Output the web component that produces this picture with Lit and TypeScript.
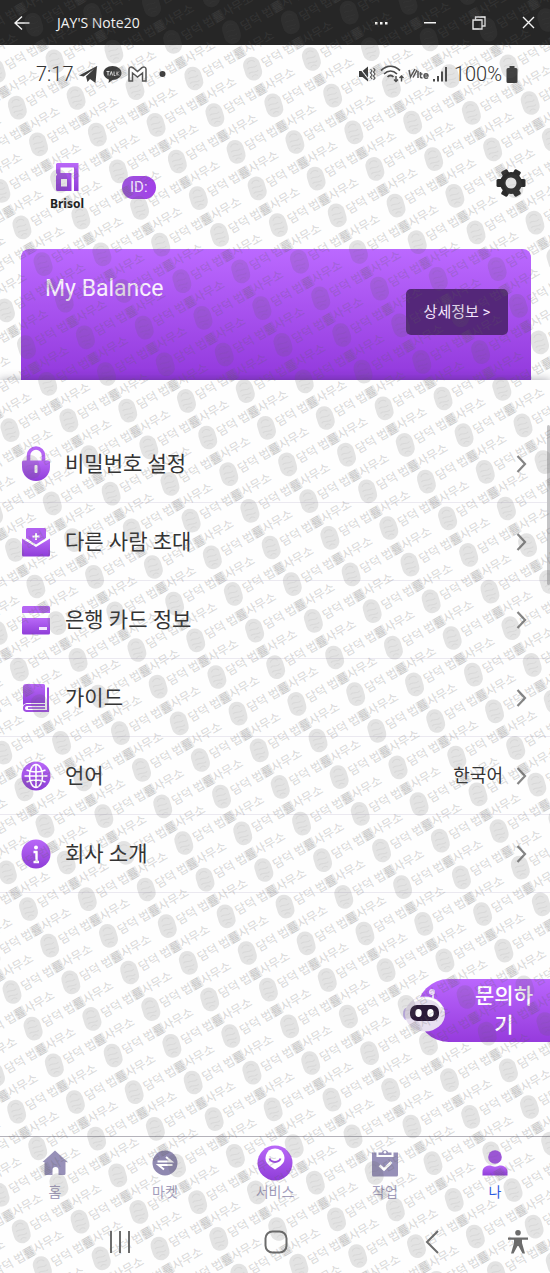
import { LitElement, html, css, svg } from "lit";
import { customElement, state } from "lit/decorators.js";

const iconGradient = svg`
  <linearGradient id="violet" x1="0" y1="0" x2="0" y2="1">
    <stop offset="0" stop-color="#b968f8"></stop>
    <stop offset="1" stop-color="#8f3dd8"></stop>
  </linearGradient>`;

const menuIcons = {
  lock: html`<svg class="glyph" viewBox="0 0 30 36" width="30" height="36" aria-hidden="true">
    <defs>${iconGradient}</defs>
    <path d="M7.500 17V9.500a7.500 7.500 0 0 1 15 0V17" fill="none" stroke="#b565f4" stroke-width="3.600"></path>
    <path d="M2.500 14.500h25a1.500 1.500 0 0 1 1.500 1.500v5a14 14 0 0 1-28 0v-5a1.500 1.500 0 0 1 1.500-1.500z" fill="url(#violet)"></path>
    <rect x="13.500" y="19" width="3" height="8" rx="1" fill="#fff"></rect>
  </svg>`,
  invite: html`<svg class="glyph" viewBox="0 0 30 30" width="30" height="30" aria-hidden="true">
    <defs>${iconGradient}</defs>
    <path d="M6.500 1h17a1.500 1.500 0 0 1 1.500 1.500v8.500L15 17.500 5 11V2.500A1.500 1.500 0 0 1 6.500 1z" fill="#b061f0"></path>
    <path d="M15 6v7M11.500 9.500h7" stroke="#fff" stroke-width="1.800"></path>
    <path d="M1 11.500l14 8.500 14-8.500V28a1.500 1.500 0 0 1-1.500 1.500h-25A1.500 1.500 0 0 1 1 28z" fill="url(#violet)"></path>
  </svg>`,
  card: html`<svg class="glyph" viewBox="0 0 30 30" width="30" height="30" aria-hidden="true">
    <defs>${iconGradient}</defs>
    <path d="M2.500 1h25A1.500 1.500 0 0 1 29 2.500V8H1V2.500A1.500 1.500 0 0 1 2.500 1z" fill="#b565f4"></path>
    <path d="M1 13h28v15a1.500 1.500 0 0 1-1.500 1.500h-25A1.500 1.500 0 0 1 1 28z" fill="url(#violet)"></path>
    <rect x="18" y="22" width="8" height="3" fill="#f3e5ff"></rect>
  </svg>`,
  book: html`<svg class="glyph" viewBox="0 0 30 30" width="30" height="30" aria-hidden="true">
    <defs>${iconGradient}</defs>
    <path d="M5 1h17.500A1.500 1.500 0 0 1 24 2.500V20H7c-2 0-3 .5-5 2V4a3 3 0 0 1 3-3z" fill="url(#violet)"></path>
    <path d="M27 4.500V28H5.500a3 3 0 0 1-2.500-3.200 3 3 0 0 1 3-2.800H24" fill="none" stroke="#a14fe4" stroke-width="2"></path>
    <path d="M7 25h17" stroke="#8f3dd8" stroke-width="1.500"></path>
  </svg>`,
  globe: html`<svg class="glyph" viewBox="0 0 30 30" width="30" height="30" aria-hidden="true">
    <defs>${iconGradient}</defs>
    <circle cx="15" cy="15" r="14.500" fill="url(#violet)"></circle>
    <g fill="none" stroke="#fff" stroke-width="1.600">
      <ellipse cx="15" cy="15" rx="6.500" ry="11.500"></ellipse>
      <path d="M15 3.500v23M3.500 15h23M5.500 9c6 2.500 13 2.500 19 0M5.500 21c6-2.500 13-2.500 19 0"></path>
    </g>
  </svg>`,
  info: html`<svg class="glyph" viewBox="0 0 30 30" width="30" height="30" aria-hidden="true">
    <defs>${iconGradient}</defs>
    <circle cx="15" cy="15" r="14.500" fill="url(#violet)"></circle>
    <circle cx="15" cy="8.500" r="2" fill="#fff"></circle>
    <path d="M12.500 13h3v9.500M12.500 23h5.500" fill="none" stroke="#fff" stroke-width="2.400"></path>
  </svg>`,
};

const tabIcons = {
  home: html`<svg viewBox="0 0 28 28" width="28" height="28" aria-hidden="true">
    <path d="M14 1.500L26.500 13h-2v11.500a1.500 1.500 0 0 1-1.500 1.500h-5.500v-5a3 3 0 0 0-6 0v5H5a1.500 1.500 0 0 1-1.500-1.500V13h-2z" fill="#9790b8"></path>
  </svg>`,
  market: html`<svg viewBox="0 0 28 28" width="28" height="28" aria-hidden="true">
    <circle cx="14" cy="14" r="12.500" fill="#8f88b0"></circle>
    <path d="M6.500 12.500h14L15 8M21.500 16h-14L13 20.500" fill="none" stroke="#fff" stroke-width="2"></path>
  </svg>`,
  service: html`<svg viewBox="0 0 36 36" width="36" height="36" aria-hidden="true">
    <defs>${iconGradient}</defs>
    <circle cx="18" cy="18" r="17.500" fill="url(#violet)"></circle>
    <path d="M18 3.500a9.500 9.500 0 0 1 5.500 17.200L18 24.500l-5.500-3.800A9.500 9.500 0 0 1 18 3.500z" fill="#fff"></path>
    <path d="M12.500 13.500c1.500 4.500 9.500 4.500 11 0" fill="none" stroke="#a24fe6" stroke-width="2"></path>
  </svg>`,
  task: html`<svg viewBox="0 0 28 28" width="28" height="28" aria-hidden="true">
    <path d="M1 3.500h4.500V8h17V3.500H27V26a1.500 1.500 0 0 1-1.500 1.500h-23A1.500 1.500 0 0 1 1 26z" fill="#9790b8"></path>
    <path d="M7.500 6V3.500h3.200a3.500 3.500 0 0 1 6.600 0h3.200V6z" fill="#9790b8"></path>
    <circle cx="14" cy="3.300" r="1.300" fill="#fff"></circle>
    <path d="M8.500 16.500l4.500 4 7.500-7.500" fill="none" stroke="#fff" stroke-width="2.600"></path>
  </svg>`,
  me: html`<svg viewBox="0 0 28 28" width="28" height="28" aria-hidden="true">
    <defs>${iconGradient}</defs>
    <circle cx="14" cy="8" r="6.800" fill="#a855ec"></circle>
    <path d="M1.500 26.500V23c0-5 4-6.500 8-6.500 2.500 1.500 6.500 1.500 9 0 4 0 8 1.500 8 6.500v3.500z" fill="url(#violet)"></path>
  </svg>`,
};

interface MenuItem {
  icon: keyof typeof menuIcons;
  label: string;
  value?: string;
}

interface Tab {
  icon: keyof typeof tabIcons;
  label: string;
}

const MENU: MenuItem[] = [
  { icon: "lock", label: "비밀번호 설정" },
  { icon: "invite", label: "다른 사람 초대" },
  { icon: "card", label: "은행 카드 정보" },
  { icon: "book", label: "가이드" },
  { icon: "globe", label: "언어", value: "한국어" },
  { icon: "info", label: "회사 소개" },
];

const TABS: Tab[] = [
  { icon: "home", label: "홈" },
  { icon: "market", label: "마켓" },
  { icon: "service", label: "서비스" },
  { icon: "task", label: "작업" },
  { icon: "me", label: "나" },
];

/** Repeating seal and office name, laid out on a slanted lattice over the page. */
@customElement("office-watermark")
export class OfficeWatermark extends LitElement {
  static styles = css`
    :host {
      display: block;
      overflow: hidden;
      pointer-events: none;
    }
    .sheet {
      display: block;
      width: 100%;
      height: 100%;
    }
    .name {
      font-family: "Noto Sans CJK KR", sans-serif;
      font-size: 12px;
      font-weight: 500;
    }
  `;

  private marks() {
    const origin = { x: 17.3, y: 107.7 };
    const across = { x: 58.83, y: -9.75 };
    const down = { x: 21.15, y: 36.65 };
    const width = window.innerWidth;
    const height = window.innerHeight;
    const out = [];
    for (let n = -6; n < height / 30 + 8; n++) {
      for (let m = -30; m < width / 50 + 8; m++) {
        const x = origin.x + m * across.x + n * down.x;
        const y = origin.y + m * across.y + n * down.y;
        if (x < -100 || x > width + 20 || y < -20 || y > height + 60) continue;
        out.push(svg`<use href="#mark" x=${x.toFixed(1)} y=${y.toFixed(1)}></use>`);
      }
    }
    return out;
  }

  render() {
    return html`<svg class="sheet" aria-hidden="true">
      <defs>
        <g id="mark">
          <g transform="rotate(-17)">
            <rect x="-8.500" y="-12" width="17" height="24" rx="8.500" fill="#606060" fill-opacity="0.17"></rect>
            <path d="M-4 -6c2 -3 6 -3 8 0M-5 -1c3 -3 6 2 10 -1M-5 4c3 -3 7 2 10 -1M-3 8c2 -2 4 -2 6 0" fill="none" stroke="#606060" stroke-opacity="0.08"></path>
          </g>
          <g transform="translate(12 -1) rotate(-30)" fill="#606060" fill-opacity="0.22">
            <text class="name" x="0" y="0">담덕 법률사무소</text>
            <rect x="36" y="-10" width="11" height="11" fill-opacity="0.12"></rect>
          </g>
        </g>
      </defs>
      ${this.marks()}
    </svg>`;
  }
}

@customElement("app-root")
export class AppRoot extends LitElement {
  @state() private active = 4;

  static styles = css`
    :host {
      display: block;
      font-family: Roboto, "Noto Sans CJK KR", sans-serif;
      color: #333;
    }
    * {
      box-sizing: border-box;
    }
    button {
      border: 0;
      padding: 0;
      background: none;
      font: inherit;
      color: inherit;
      cursor: pointer;
    }
    svg {
      display: block;
      flex: none;
    }
    .page {
      position: relative;
      display: flex;
      flex-direction: column;
      min-height: 100vh;
      background: #fefefe;
    }
    .watermark {
      position: absolute;
      inset: 0;
      z-index: 2;
    }

    .titlebar {
      display: flex;
      align-items: center;
      height: 45px;
      background: #262626;
      color: #f4f4f4;
    }
    .titlebar button {
      display: grid;
      place-items: center;
      width: 44px;
      height: 40px;
    }
    .title {
      flex: 1;
      margin: 0 0 0 13px;
      font: 500 14px/24px "Open Sans", sans-serif;
    }
    .window-actions {
      display: flex;
      gap: 5px;
    }

    .status {
      display: flex;
      align-items: center;
      justify-content: space-between;
      padding: 15px 32px 0 36px;
      font-size: 20px;
      font-weight: 300;
      line-height: 28px;
      color: #333;
    }
    .status-side {
      display: flex;
      align-items: center;
      gap: 6px;
    }
    .status-side.right {
      gap: 4px;
    }

    .profile {
      display: flex;
      align-items: center;
      padding: 74px 24px 37px 49px;
    }
    .brand {
      display: flex;
      flex-direction: column;
      align-items: center;
      gap: 4px;
      width: 36px;
      font: 700 12px/16px "Noto Sans", sans-serif;
      color: #1d1d1d;
    }
    .id {
      margin-left: 37px;
      padding: 0 8px;
      border-radius: 12px;
      background: linear-gradient(90deg, #9d55dc, #a23fe8);
      color: #f3e4ff;
      font-size: 15px;
      line-height: 23px;
    }
    .settings {
      margin: 0 0 8px auto;
    }

    .balance {
      display: flex;
      justify-content: space-between;
      align-items: flex-start;
      min-height: 131px;
      margin: 0 19px 0 21px;
      padding: 24px 23px 24px 24px;
      border-radius: 8px 8px 0 0;
      background: linear-gradient(#bb69ff, #9239dc);
      color: #f8effc;
    }
    .balance h1 {
      margin: 0;
      font-size: 23px;
      font-weight: 400;
      line-height: 32px;
    }
    .details {
      margin-top: 16px;
      width: 102px;
      height: 46px;
      border-radius: 5px;
      background: #542779;
      color: #f4e6ff;
      font-size: 15px;
      line-height: 24px;
    }
    .details:hover {
      background: #63308c;
    }

    .panel {
      flex: 1;
      display: flex;
      flex-direction: column;
      padding-top: 45px;
      background: #fefefe;
      box-shadow: 0 -1px 8px rgba(40, 40, 60, 0.35);
      position: relative;
    }
    .scroll-thumb {
      position: absolute;
      top: 45px;
      right: 0;
      width: 3px;
      height: 160px;
      border-radius: 2px;
      background: #c4c4c6;
    }
    .menu {
      margin: 0;
      padding: 0;
      list-style: none;
    }
    .menu li {
      border-bottom: 1px solid #ebe9f0;
    }
    .row {
      display: flex;
      align-items: center;
      width: 100%;
      height: 77px;
      padding: 0 23px 0 21px;
      text-align: left;
      font-size: 21px;
      line-height: 32px;
    }
    .row-label {
      flex: 1;
      margin-left: 14px;
    }
    .row-value {
      margin-right: 12px;
      font-size: 18px;
    }

    .help {
      position: relative;
      align-self: flex-end;
      display: flex;
      align-items: center;
      justify-content: flex-end;
      width: 133px;
      height: 63px;
      margin: 86px 0 48px;
      padding-right: 16px;
      border-radius: 32px 0 0 32px;
      background: linear-gradient(#ba66fd, #963bdd);
      color: #fff;
      font-size: 21px;
      font-weight: 500;
      line-height: 29px;
    }
    .help-text {
      width: 60px;
      word-break: break-all;
      text-align: center;
    }
    .robot {
      position: absolute;
      left: -15px;
      top: 8px;
    }

    .tabs {
      position: relative;
      display: grid;
      grid-template-columns: repeat(5, 1fr);
      height: 72px;
      border-top: 1px solid #b4b2ba;
      background: #fefefe;
    }
    .tab {
      display: flex;
      flex-direction: column;
      align-items: center;
      padding-top: 7px;
      text-decoration: none;
      color: #a49ebd;
      font-size: 14px;
      line-height: 20px;
    }
    .tab.active {
      color: #2c5be0;
    }
    .tab-icon {
      display: grid;
      place-items: center;
      height: 38px;
    }

    .system {
      display: flex;
      align-items: center;
      gap: 46px;
      height: 65px;
      padding: 2px 12px 0 100px;
      color: #6c6c6c;
    }
    .system-main {
      flex: 1;
      display: flex;
      justify-content: space-between;
    }
    .system button {
      display: grid;
      place-items: center;
      width: 40px;
      height: 40px;
    }
  `;

  private titlebar() {
    return html`<header class="titlebar">
      <button aria-label="Back">
        <svg width="16" height="16" viewBox="0 0 16 16" fill="none" stroke="currentColor" stroke-width="1.400"><path d="M15.500 8H1M8 1.500L1 8l7 6.500"></path></svg>
      </button>
      <p class="title">JAY'S Note20</p>
      <div class="window-actions">
        <button aria-label="More">
          <svg width="14" height="4" viewBox="0 0 14 4" fill="currentColor"><path d="M1 1h2.500v2.500H1zM6 1h2.500v2.500H6zM11 1h2.500v2.500H11z"></path></svg>
        </button>
        <button aria-label="Minimize">
          <svg width="12" height="2" viewBox="0 0 12 2" fill="currentColor"><path d="M0 0h12v1.500H0z"></path></svg>
        </button>
        <button aria-label="Restore">
          <svg width="14" height="14" viewBox="0 0 14 14" fill="none" stroke="currentColor" stroke-width="1.300"><path d="M1 4h9v9H1zM3.500 4V1H13v9h-3"></path></svg>
        </button>
        <button aria-label="Close">
          <svg width="13" height="13" viewBox="0 0 13 13" fill="none" stroke="currentColor" stroke-width="1.400"><path d="M1 1l11 11M12 1L1 12"></path></svg>
        </button>
      </div>
    </header>`;
  }

  private status() {
    return html`<div class="status">
      <div class="status-side">
        <span>7:17</span>
        <svg width="18" height="17" viewBox="0 0 18 17" fill="#3d3d3d"><path d="M0 9.500L18 0l-1.500 17-5.500-4-2.500 3-1.500-5.500L15 3 4.500 10.500z"></path></svg>
        <svg width="19" height="18" viewBox="0 0 19 18">
          <path d="M9.500 1c5 0 9 3 9 7s-4 7-9 7l-4 3 .5-3.500C3 13.500.5 11 .5 8c0-4 4-7 9-7z" fill="#3d3d3d"></path>
          <path d="M3.500 6.500h3M5 6.500v4M7 10.500l1.300-4 1.300 4M11 6.500v4h1.500M14 6.500v4M16 6.500l-2 2 2 2" fill="none" stroke="#ddd"></path>
        </svg>
        <svg width="19" height="16" viewBox="0 0 19 16" fill="none" stroke="#555" stroke-width="1.500"><path d="M1 3v12h3.500V7l5 4 5-4v8H18V3c0-2-2.500-2.500-4-1.300L9.500 5.500 5 1.700C3.500.5 1 1 1 3z"></path></svg>
        <svg width="18" height="6" viewBox="0 0 18 6" fill="#3d3d3d"><circle cx="9.500" cy="3" r="3"></circle></svg>
      </div>
      <div class="status-side right">
        <svg width="18" height="16" viewBox="0 0 18 16">
          <path d="M1 5h3.500L10 .5v15L4.500 11H1z" fill="#3d3d3d"></path>
          <path d="M1 1l11 14" stroke="#fefefe" stroke-width="1.200"></path>
          <path d="M12.500 3l1.500 2-1.500 2 1.500 2-1.500 2 1.500 2M15.500 2L17 4l-1.500 2L17 8l-1.500 2 1.500 2-1.500 2" fill="none" stroke="#555" stroke-width="1.200"></path>
        </svg>
        <svg width="24" height="18" viewBox="0 0 24 18" fill="none" stroke="#4a4a4a" stroke-width="1.700">
          <path d="M1 5.500c6-5.500 13-5.500 19 0M4 9c4-4 9-4 13 0M7.500 12c2-2 4-2 6 0"></path>
          <path d="M16 11v5.500M14 14.500l2 2 2-2M21.500 16.500V11M19.500 13l2-2 2 2" stroke-width="1.400"></path>
        </svg>
        <svg width="21" height="12" viewBox="0 0 21 12" fill="none" stroke="#555" stroke-width="1.500">
          <path d="M1 2l1.500 7L7 1M5 9.500L9 2M10 3v7M12.500 4v4.500c0 1.500 1 1.500 2 1.200M11.500 6h3M16 8h4c0-3-4-3-4 0s3 2.500 4 1.500"></path>
        </svg>
        <svg width="17" height="16" viewBox="0 0 17 16" fill="#4a4a4a"><path d="M0 13h2v2.500H0zM4 10h2v5.500H4zM8 5.500h2v10H8zM12 1h2v14.500h-2z"></path></svg>
        <span>100%</span>
        <svg width="12" height="17" viewBox="0 0 12 17" fill="#3d3d3d"><path d="M3.500 0h5v2H10a1.500 1.500 0 0 1 1.500 1.500v12A1.500 1.500 0 0 1 10 17H2A1.500 1.500 0 0 1 .5 15.500v-12A1.500 1.500 0 0 1 2 2h1.500z"></path></svg>
      </div>
    </div>`;
  }

  render() {
    return html`<div class="page">
      ${this.titlebar()} ${this.status()}
      <section class="profile">
        <div class="brand">
          <svg width="24" height="30" viewBox="0 0 24 30" fill="none">
            <defs>${iconGradient}</defs>
            <path fill="url(#violet)" fill-rule="evenodd" d="M2.500 1H23.500V29H19V5.500H5.500V11H16.500V29H2.500A1.500 1.500 0 0 1 1 27.500V14l1.200-1.500L1 11V2.500A1.500 1.500 0 0 1 2.500 1zM6 17V24.500H12V17z"></path>
          </svg>
          <span>Brisol</span>
        </div>
        <span class="id">ID:</span>
        <button class="settings" aria-label="Settings">
          <svg width="30" height="30" viewBox="-15 -15 30 30">
            <g fill="#2b2b2b">
              <rect x="-3.500" y="-14.500" width="7" height="29" rx="1.500" transform="rotate(30)"></rect>
              <rect x="-3.500" y="-14.500" width="7" height="29" rx="1.500" transform="rotate(-30)"></rect>
              <rect x="-14.500" y="-4" width="29" height="8" rx="1.500"></rect>
              <circle r="11"></circle>
            </g>
            <circle r="5.500" fill="#fefefe"></circle>
          </svg>
        </button>
      </section>
      <section class="balance">
        <h1>My Balance</h1>
        <button class="details">상세정보 &gt;</button>
      </section>
      <main class="panel">
        <div class="scroll-thumb"></div>
        <ul class="menu">
          ${MENU.map(
            (item) => html`<li>
              <button class="row">
                ${menuIcons[item.icon]}
                <span class="row-label">${item.label}</span>
                ${item.value ? html`<span class="row-value">${item.value}</span>` : null}
                <svg width="12" height="20" viewBox="0 0 12 20" fill="none" stroke="#858585" stroke-width="2.200"><path d="M2.500 2l7.500 8-7.500 8"></path></svg>
              </button>
            </li>`
          )}
        </ul>
        <button class="help">
          <svg class="robot" width="46" height="46" viewBox="0 0 46 46" aria-hidden="true">
            <path d="M31 6v6" stroke="#e6d3f7" stroke-width="2"></path>
            <circle cx="30" cy="5" r="3" fill="#f0dcff"></circle>
            <ellipse cx="4" cy="27" rx="3" ry="6" fill="#c6b4ee"></ellipse>
            <ellipse cx="23" cy="27" rx="20" ry="17.500" fill="#e8e0f0"></ellipse>
            <path d="M12 14c12-6 26-2 29 10" fill="none" stroke="#fff" stroke-width="2"></path>
            <rect x="8" y="18" width="29" height="16" rx="7" fill="#2b1a38"></rect>
            <ellipse cx="16.500" cy="26" rx="3.200" ry="4" fill="#fff"></ellipse>
            <ellipse cx="28.500" cy="26" rx="3.200" ry="4" fill="#fff"></ellipse>
          </svg>
          <span class="help-text">문의하기</span>
        </button>
      </main>
      <nav class="tabs">
        ${TABS.map(
          (tab, i) => html`<a
            class="tab ${i === this.active ? "active" : ""}"
            href="#"
            @click=${(e: Event) => {
              e.preventDefault();
              this.active = i;
            }}
            ><span class="tab-icon">${tabIcons[tab.icon]}</span><span>${tab.label}</span></a
          >`
        )}
      </nav>
      <footer class="system">
        <div class="system-main">
          <button aria-label="Recent apps">
            <svg width="22" height="22" viewBox="0 0 22 22" stroke="currentColor" stroke-width="2"><path d="M2 0v22M11 0v22M20 0v22"></path></svg>
          </button>
          <button aria-label="Home">
            <svg width="24" height="24" viewBox="0 0 24 24" fill="none" stroke="currentColor" stroke-width="2"><rect x="1.500" y="1.500" width="21" height="21" rx="7"></rect></svg>
          </button>
          <button aria-label="Back">
            <svg width="14" height="24" viewBox="0 0 14 24" fill="none" stroke="currentColor" stroke-width="2"><path d="M13 1L2 12l11 11"></path></svg>
          </button>
        </div>
        <button aria-label="Accessibility">
          <svg width="20" height="24" viewBox="0 0 20 24" fill="currentColor"><circle cx="10" cy="2.800" r="2.800"></circle><path d="M0 7.500h20v2.300h-6V13l3 10.500h-2.500L10.500 16h-1L5.500 23.500H3L6 13V9.800H0z"></path></svg>
        </button>
      </footer>
      <office-watermark class="watermark"></office-watermark>
    </div>`;
  }
}
